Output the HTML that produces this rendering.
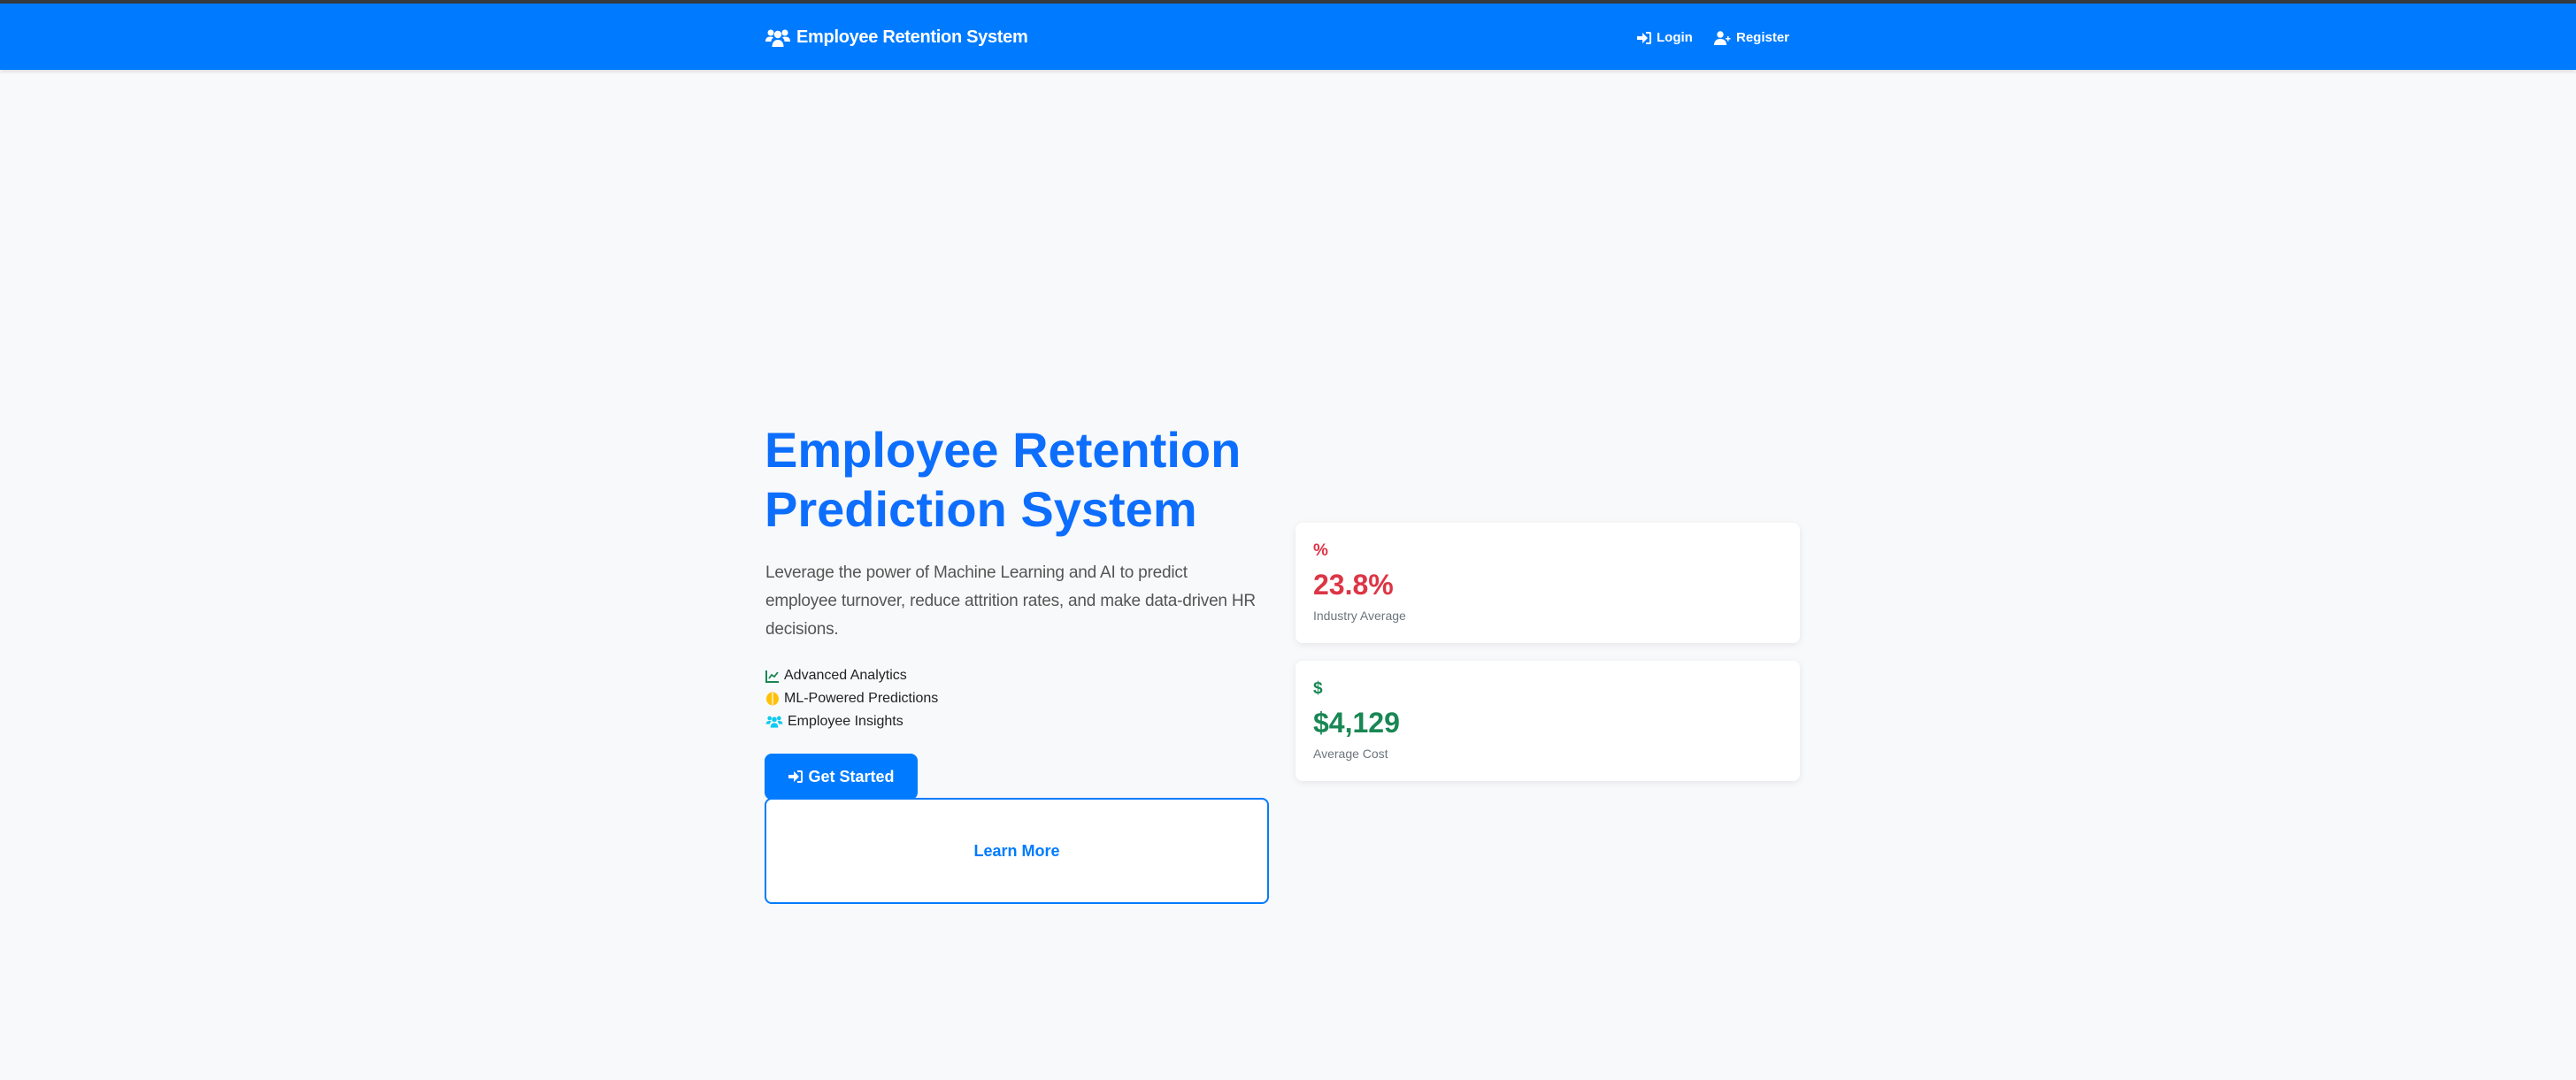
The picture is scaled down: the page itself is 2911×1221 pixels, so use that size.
<!DOCTYPE html>
<html><head><meta charset="utf-8"><style>
*{box-sizing:border-box;margin:0;padding:0}
body{width:2911px;height:1221px;background:#f8f9fa;font-family:"Liberation Sans",sans-serif;position:relative;overflow:hidden}
.top{position:absolute;left:0;top:0;width:100%;height:4px;background:#343a40}
.nav{position:absolute;left:0;top:4px;width:100%;height:75px;background:#007bff;box-shadow:0 2px 4px rgba(0,0,0,.12)}
.brand{position:absolute;left:864px;top:27px;color:#fff;font-weight:bold;font-size:20px;display:flex;align-items:center;gap:6px;letter-spacing:-0.3px}
.nl{position:absolute;top:30px;color:#fff;font-size:15px;font-weight:bold;display:flex;align-items:center;gap:5px}
h1{position:absolute;left:864px;top:475px;color:#0d6efd;font-size:56px;line-height:67px;font-weight:bold;width:600px}
.lead{position:absolute;left:865px;top:632px;color:#555;font-size:19px;line-height:32px;white-space:nowrap;letter-spacing:-0.2px}
.feat{position:absolute;left:865px;top:751px;font-size:16px;color:#222;line-height:26px}
.feat div{display:flex;align-items:center;gap:5px}
.btn1{position:absolute;left:864px;top:852px;width:173px;height:52px;background:#007bff;border-radius:8px;color:#fff;font-weight:bold;font-size:18px;display:flex;align-items:center;justify-content:center;gap:5px}
.btn2{position:absolute;left:864px;top:902px;width:570px;height:120px;border:2px solid #007bff;border-radius:8px;background:#fff;color:#007bff;font-weight:bold;font-size:18px;display:flex;align-items:center;justify-content:center}
.card{position:absolute;left:1464px;width:570px;height:136px;background:#fff;border-radius:8px;box-shadow:0 2px 8px rgba(0,0,0,.08)}
.ic{position:absolute;left:20px;top:21px;font-weight:bold;font-size:19px}
.val{position:absolute;left:20px;top:52px;font-weight:bold;font-size:32px}
.lab{position:absolute;left:20px;top:97px;font-size:14px;color:#6c757d}
</style></head><body>
<div class="top"></div>
<div class="nav">
<div class="brand"><svg width="30" height="22" viewBox="0 0 30 22" fill="#fff"><circle cx="7" cy="5" r="3.5"/><circle cx="23" cy="5" r="3.5"/><circle cx="15" cy="7" r="4.2"/><path d="M1 15c0-4 2-5.5 6-5.5 1.5 0 2.5.5 3 1C8 12 7.5 13.5 7.5 15z"/><path d="M29 15c0-4-2-5.5-6-5.5-1.5 0-2.5.5-3 1 2 1.5 2.5 3 2.5 4.5z"/><path d="M8.5 21c0-5 2.5-8 6.5-8s6.5 3 6.5 8z"/></svg>Employee Retention System</div>
<div class="nl" style="left:1849px"><svg width="18" height="16" viewBox="0 0 18 16" fill="#fff"><path d="M1 6h6V2l6 6-6 6v-4H1z"/><path d="M11 1h4a2 2 0 0 1 2 2v10a2 2 0 0 1-2 2h-4v-2h4V3h-4z"/></svg>Login</div>
<div class="nl" style="left:1937px"><svg width="20" height="16" viewBox="0 0 20 16" fill="#fff"><circle cx="7" cy="4" r="3.7"/><path d="M0 16c0-5 3-7 7-7s7 2 7 7z"/><path d="M15 6h1.5v2h2v1.5h-2v2H15v-2h-2V8h2z"/></svg>Register</div>
</div>
<h1>Employee Retention Prediction System</h1>
<div class="lead">Leverage the power of Machine Learning and AI to predict<br>employee turnover, reduce attrition rates, and make data-driven HR<br>decisions.</div>
<div class="feat">
<div><svg width="16" height="15" viewBox="0 0 16 15"><path d="M1 1v13h14" stroke="#198754" stroke-width="2" fill="none"/><path d="M4 10l3-4 3 2 4-5" stroke="#198754" stroke-width="1.8" fill="none"/></svg>Advanced Analytics</div>
<div><svg width="16" height="16" viewBox="0 0 16 16"><ellipse cx="8" cy="8" rx="7" ry="7.5" fill="#ffc107"/><path d="M8 1v14" stroke="#f8f9fa" stroke-width="1.3"/></svg>ML-Powered Predictions</div>
<div><svg width="20" height="16" viewBox="0 0 30 22" fill="#0dcaf0"><circle cx="7" cy="5" r="3.5"/><circle cx="23" cy="5" r="3.5"/><circle cx="15" cy="7" r="4.2"/><path d="M1 15c0-4 2-5.5 6-5.5 1.5 0 2.5.5 3 1C8 12 7.5 13.5 7.5 15z"/><path d="M29 15c0-4-2-5.5-6-5.5-1.5 0-2.5.5-3 1 2 1.5 2.5 3 2.5 4.5z"/><path d="M8.5 21c0-5 2.5-8 6.5-8s6.5 3 6.5 8z"/></svg>Employee Insights</div>
</div>
<div class="btn1"><svg width="18" height="16" viewBox="0 0 18 16" fill="#fff"><path d="M1 6h6V2l6 6-6 6v-4H1z"/><path d="M11 1h4a2 2 0 0 1 2 2v10a2 2 0 0 1-2 2h-4v-2h4V3h-4z"/></svg>Get Started</div>
<div class="btn2">Learn More</div>
<div class="card" style="top:591px;color:#dc3545"><div class="ic">%</div><div class="val">23.8%</div><div class="lab">Industry Average</div></div>
<div class="card" style="top:747px;color:#198754"><div class="ic">$</div><div class="val">$4,129</div><div class="lab">Average Cost</div></div>
</body></html>
